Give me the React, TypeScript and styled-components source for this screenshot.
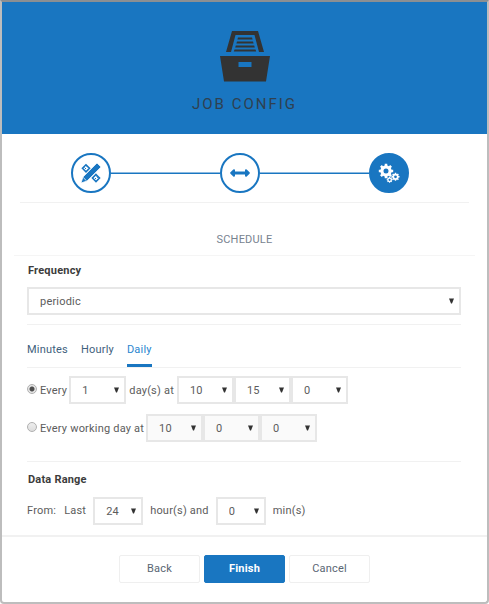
import React, { useState } from "react";
import styled, { createGlobalStyle, css } from "styled-components";

const blue = "#1976c1";
const line = "#f1f1f1";

const GlobalStyle = createGlobalStyle`
  *, *::before, *::after { box-sizing: border-box; }
  body {
    margin: 0;
    background: #fff;
    color: #5c5c5c;
    font: 11px/16px Roboto, "Liberation Sans", sans-serif;
    letter-spacing: 0.2px;
  }
`;

const Dialog = styled.main`
  display: flex;
  flex-direction: column;
  min-height: 100vh;
  border: 2px solid #bdbdbd;
  border-top-color: #8b8f93;
  border-radius: 0 0 4px 4px;
  background: #fff;
`;

const Header = styled.header`
  display: flex;
  flex-direction: column;
  align-items: center;
  gap: 12px;
  height: 132px;
  padding-top: 29px;
  background: ${blue};
  color: #333;
`;

const Title = styled.h1`
  margin: 0;
  color: #2f4050;
  font-size: 15px;
  line-height: 20px;
  font-weight: 400;
  letter-spacing: 2px;
`;

const Steps = styled.nav`
  display: flex;
  align-items: center;
  margin: 0 18px;
  padding: 19px 60px 9px 51px;
  border-bottom: 1px solid ${line};
`;

const Step = styled.button<{ $active?: boolean }>`
  display: grid;
  place-items: center;
  flex: none;
  width: 40px;
  height: 40px;
  padding: 0;
  border: 2px solid ${blue};
  border-radius: 50%;
  background: ${(p) => (p.$active ? blue : "#fff")};
  color: ${(p) => (p.$active ? "#fff" : blue)};
`;

const Connector = styled.span`
  flex: 1;
  height: 2px;
  border-top: 1px solid #8cbae0;
  background: ${blue};
  background-clip: padding-box;
`;

const SectionTitle = styled.h2`
  margin: 0 12px;
  padding: 29px 0 7px;
  border-bottom: 1px solid #f5f5f5;
  color: #77838f;
  font-size: 11px;
  line-height: 16px;
  font-weight: 400;
  text-align: center;
`;

const Form = styled.div`
  display: flex;
  flex-direction: column;
  padding: 7px 26px 10px 25px;
`;

const heading = css`
  padding: 0 1px;
  color: #3c3c3c;
  font-size: 11px;
  line-height: 16px;
  font-weight: 700;
`;

const FieldLabel = styled.label`
  ${heading}
`;

const RangeTitle = styled.h3`
  ${heading}
  margin: 0;
`;

const SelectBox = styled.span<{ $size: "full" | "wide" | "narrow" }>`
  display: grid;
  align-items: center;
  flex: none;
  width: ${(p) => ({ full: "auto", wide: "57px", narrow: "50px" })[p.$size]};
  > * { grid-area: 1 / 1; }
  > svg {
    justify-self: end;
    margin-right: 7px;
    pointer-events: none;
  }
`;

const SelectControl = styled.select<{ $muted?: boolean }>`
  width: 100%;
  height: 28px;
  padding: 1px 11px 0;
  border: 2px solid #e7e7e7;
  border-radius: 0;
  background: ${(p) => (p.$muted ? "#fafafa" : "#fff")};
  color: #5c5c5c;
  font: inherit;
  letter-spacing: inherit;
  appearance: none;
`;

const FrequencyField = styled.div`
  margin-top: 8px;
  padding-bottom: 9px;
  border-bottom: 1px solid ${line};
`;

const Tabs = styled.div`
  display: flex;
  gap: 13px;
  padding-top: 17px;
  border-bottom: 1px solid ${line};
`;

const Tab = styled.button<{ $active: boolean }>`
  padding: 0 0 6px;
  border: 0;
  border-bottom: 3px solid ${(p) => (p.$active ? blue : "transparent")};
  background: none;
  color: ${(p) => (p.$active ? "#2a86cf" : "#3f5f7d")};
  font: inherit;
  letter-spacing: inherit;
`;

const Options = styled.div`
  display: flex;
  flex-direction: column;
  gap: 10px;
  padding: 8px 0 19px;
  border-bottom: 1px solid ${line};
`;

const Row = styled.div`
  display: flex;
  align-items: center;
`;

const Choice = styled.label`
  display: flex;
  align-items: center;
  gap: 3px;
  margin-right: 2px;
  padding-top: 1px;
`;

const Radio = styled.input`
  width: 10px;
  height: 10px;
  margin: 0 0 4px;
  border: 1px solid #b0b0b0;
  border-radius: 50%;
  background: linear-gradient(#eee, #ddd);
  appearance: none;
  &:checked {
    background: radial-gradient(circle, #4d4d4d 0 2px, #e6e6e6 3px);
  }
`;

const Between = styled.span`
  margin: 0 3px;
  padding-top: 1px;
`;

const Range = styled.section`
  display: flex;
  flex-direction: column;
  gap: 9px;
  padding-top: 10px;
`;

const RangeRow = styled(Row)`
  gap: 7px;
`;

const FromText = styled.span`
  margin-right: 1px;
`;

const Footer = styled.footer`
  display: flex;
  justify-content: center;
  gap: 4px;
  padding: 18px 0;
  border-top: 2px solid ${line};
`;

const Button = styled.button<{ $primary?: boolean }>`
  width: 81px;
  height: 28px;
  padding: 0;
  border: 1px solid ${(p) => (p.$primary ? blue : "#efefef")};
  border-radius: 2px;
  background: ${(p) => (p.$primary ? blue : "#fff")};
  color: ${(p) => (p.$primary ? "#fff" : "#596673")};
  font: inherit;
  font-weight: ${(p) => (p.$primary ? 700 : 400)};
  letter-spacing: inherit;
`;

function Select({ label, value, options, size = "wide", muted, id }: {
  label: string; value: string; options?: string[];
  size?: "full" | "wide" | "narrow"; muted?: boolean; id?: string;
}) {
  return (
    <SelectBox $size={size}>
      <SelectControl id={id} aria-label={label} defaultValue={value} $muted={muted}>
        {(options ?? [value]).map((o) => <option key={o}>{o}</option>)}
      </SelectControl>
      <svg width="5" height="6" viewBox="0 0 5 6" aria-hidden="true">
        <path d="M0 .5h5L3 5.500H2z" fill="#333" />
      </svg>
    </SelectBox>
  );
}

function DrawerIcon() {
  return (
    <svg width="50" height="51" viewBox="0 0 50 51" fill="#333" aria-hidden="true">
      <path d="M12 0h26l6 21h-5L34.500 4h-19L11 21H6z" />
      <path d="M18 6.500h14l.6 2H17.400zM17 10.500h16l.6 2H16.400zM15.800 14.500h18.400l.6 2H15.200zM14.500 18.500h21l.7 2H13.800z" />
      <path fillRule="evenodd" d="M0 25h50l-4 25.500H4zM18.500 31v5h13v-5z" />
    </svg>
  );
}

function DesignIcon() {
  return (
    <svg width="20" height="20" viewBox="0 0 20 20" aria-hidden="true">
      <g fill="none" stroke="currentColor" strokeWidth="1.600">
        <path d="M5 1.800 1.500 5.300l3.500 3.500 3.500-3.500zM15 11.500l3.500 3.500-3.500 3.500-3.500-3.500z" />
        <path d="M3.500 4.500 5 6M5.500 3 7 4.500M14 15l1 1M15.500 13.500l1.300 1.300" strokeWidth="1" />
      </g>
      <path d="M16 0 20 4 6 18 0 20 2 14z" fill="currentColor" stroke="#fff" strokeWidth=".7" />
      <path d="M2.200 14.500 5.500 17.800" stroke="#fff" strokeWidth=".8" />
    </svg>
  );
}

function ArrowIcon() {
  return (
    <svg width="20" height="8" viewBox="0 0 20 8" aria-hidden="true">
      <path d="M4 1.200v5.600L1.200 4zM16 1.200v5.600L18.800 4z" fill="currentColor" stroke="currentColor" strokeWidth="2" strokeLinejoin="round" />
      <path d="M4 4h12" stroke="currentColor" strokeWidth="3" />
    </svg>
  );
}

function gear(cx: number, cy: number, outer: number, inner: number, hole: number, teeth: number) {
  const step = (Math.PI * 2) / teeth;
  const at = (r: number, a: number) =>
    `${(cx + r * Math.cos(a)).toFixed(2)} ${(cy + r * Math.sin(a)).toFixed(2)}`;
  const points: string[] = [];
  for (let i = 0; i < teeth; i++) {
    const a = i * step;
    points.push(at(inner, a - step * 0.3), at(outer, a - step * 0.22), at(outer, a + step * 0.22), at(inner, a + step * 0.3));
  }
  return `M${points.join("L")}ZM${cx - hole} ${cy}a${hole} ${hole} 0 1 0 ${hole * 2} 0a${hole} ${hole} 0 1 0 ${-hole * 2} 0Z`;
}

function GearsIcon() {
  return (
    <svg width="22" height="20" viewBox="0 0 22 20" fill="currentColor" fillRule="evenodd" aria-hidden="true">
      <path d={gear(8, 8, 7.3, 5.7, 2.5, 8)} />
      <path d={gear(17.5, 13.8, 4.1, 3.2, 1.4, 8)} />
      <path d={gear(11.6, 16.8, 3, 2.4, 1.1, 8)} />
    </svg>
  );
}

const tabs = ["Minutes", "Hourly", "Daily"];

export default function App() {
  const [tab, setTab] = useState("Daily");
  return (
    <>
      <GlobalStyle />
      <Dialog>
        <Header>
          <DrawerIcon />
          <Title>JOB CONFIG</Title>
        </Header>
        <Steps aria-label="Steps">
          <Step aria-label="Design"><DesignIcon /></Step>
          <Connector />
          <Step aria-label="Mapping"><ArrowIcon /></Step>
          <Connector />
          <Step $active aria-label="Schedule" aria-current="step"><GearsIcon /></Step>
        </Steps>
        <SectionTitle>SCHEDULE</SectionTitle>
        <Form>
          <FieldLabel htmlFor="frequency">Frequency</FieldLabel>
          <FrequencyField>
            <Select id="frequency" label="Frequency" value="periodic" size="full" />
          </FrequencyField>
          <Tabs role="tablist">
            {tabs.map((t) => (
              <Tab key={t} role="tab" aria-selected={t === tab} $active={t === tab} onClick={() => setTab(t)}>{t}</Tab>
            ))}
          </Tabs>
          <Options>
            <Row>
              <Choice><Radio type="radio" name="mode" defaultChecked />Every</Choice>
              <Select label="Days" value="1" />
              <Between>day(s) at</Between>
              <Select label="Hour" value="10" />
              <Select label="Minute" value="15" />
              <Select label="Second" value="0" />
            </Row>
            <Row>
              <Choice><Radio type="radio" name="mode" />Every working day at</Choice>
              <Select label="Working day hour" value="10" muted />
              <Select label="Working day minute" value="0" muted />
              <Select label="Working day second" value="0" muted />
            </Row>
          </Options>
          <Range>
            <RangeTitle>Data Range</RangeTitle>
            <RangeRow>
              <FromText>From:</FromText>
              <span>Last</span>
              <Select label="Hours" value="24" size="narrow" />
              <span>hour(s) and</span>
              <Select label="Minutes" value="0" size="narrow" />
              <span>min(s)</span>
            </RangeRow>
          </Range>
        </Form>
        <Footer>
          <Button type="button">Back</Button>
          <Button type="button" $primary>Finish</Button>
          <Button type="button">Cancel</Button>
        </Footer>
      </Dialog>
    </>
  );
}
